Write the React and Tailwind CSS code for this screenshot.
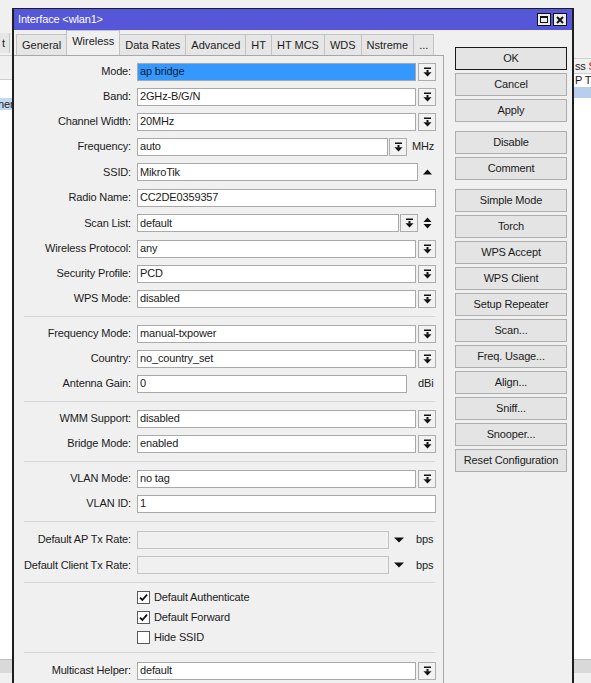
import React from "react";

// Small glyph used on every combo-box button: a bar over a down arrow
function DropIcon() {
  return (
    <svg width="9" height="10" viewBox="0 0 9 10">
      <rect x="1" y="0.5" width="7" height="1.5" fill="#111" />
      <rect x="3.5" y="3" width="2" height="2.5" fill="#111" />
      <path d="M0.5 5.2 H8.5 L4.5 9.5 Z" fill="#111" />
    </svg>
  );
}

function DropBtn({ className = "" }) {
  return (
    <div
      className={`flex h-[18px] w-[18px] shrink-0 items-center justify-center border border-[#adadad] bg-[#f2f2f2] ${className}`}
    >
      <DropIcon />
    </div>
  );
}

function Field({ value, className = "", selected = false, disabled = false }) {
  return (
    <div
      className={`flex h-[18px] items-center overflow-hidden whitespace-nowrap border ${
        disabled ? "border-[#c4c4c4] bg-[#f0f0f0]" : "border-[#a9a9a9] bg-white"
      } ${className}`}
    >
      {selected ? (
        <div className="flex h-full w-full items-center bg-[#3399ff] pl-[2px] text-[#0d1a33]">{value}</div>
      ) : (
        <span className="pl-[2px]">{value}</span>
      )}
    </div>
  );
}

function Row({ label, children, tall = false }) {
  return (
    <div className={`flex ${tall ? "h-[26px]" : "h-[25px]"} shrink-0 items-center`}>
      <div className="w-[117px] shrink-0 whitespace-nowrap text-right">{label}</div>
      <div className="ml-[6px] flex w-[299px] items-center">{children}</div>
    </div>
  );
}

function SelectRow({ label, value, selected }) {
  return (
    <Row label={label}>
      <Field value={value} selected={selected} className="flex-1" />
      <DropBtn className="ml-[2px]" />
    </Row>
  );
}

function Sep({ h = "h-[10px]" }) {
  return (
    <div className={`flex ${h} shrink-0 items-center pl-[10px] pr-[8px]`}>
      <div className="h-px w-full bg-[#d7d7d7]" />
    </div>
  );
}

function Check({ checked, label }) {
  return (
    <div className="flex h-[20px] shrink-0 items-center pl-[123px]">
      <div className="flex h-[13px] w-[13px] items-center justify-center border border-[#5a5a5a] bg-white">
        {checked && (
          <svg width="9" height="9" viewBox="0 0 9 9">
            <path d="M1 4.6 L3.4 7 L8 1.6" fill="none" stroke="#111" strokeWidth="1.8" />
          </svg>
        )}
      </div>
      <span className="ml-[4px]">{label}</span>
    </div>
  );
}

function Tab({ label, active }) {
  return (
    <div
      className={`-ml-px flex items-center border border-b-0 border-[#c3c3c3] px-[5px] tracking-normal ${
        active ? "z-10 h-[25px] bg-[#f0f0f0] pb-[3px]" : "h-[21px] bg-[#e6e6e6]"
      }`}
    >
      {label}
    </div>
  );
}

function Btn({ label, primary }) {
  return (
    <div
      className={`flex h-[23px] w-[112px] items-center justify-center border bg-[#e4e4e4] ${
        primary ? "border-[#1a1a1a]" : "border-[#adadad]"
      }`}
    >
      {label}
    </div>
  );
}

export default function App() {
  return (
    <div className="relative h-[683px] w-[591px] overflow-hidden bg-[#f0f0f0] font-['Liberation_Sans',Arial,sans-serif] text-[11px] tracking-[-0.15px] text-[#1b1b1b]">
      {/* applications behind the dialog */}
      <div className="flex h-full">
        <div className="flex w-[12px] flex-col overflow-hidden whitespace-nowrap">
          <div className="h-[33px] shrink-0 bg-[#f0f0f0]" />
          <div className="flex h-[22px] shrink-0 items-start bg-[#f0f0f0]">
            <div className="flex h-[20px] w-[10px] items-center border-r border-[#c3c3c3] bg-[#e6e6e6] pl-[2px]">t</div>
          </div>
          <div className="h-[25px] shrink-0 border-y border-[#cfcfcf] bg-[#f0f0f0]" />
          <div className="h-[18px] shrink-0 bg-white" />
          <div className="flex h-[12px] shrink-0 items-center bg-[#c3d9f0] text-[#222]">
            <span className="-ml-[2px]">ner</span>
          </div>
          <div className="flex-1 bg-white" />
          <div className="h-[14px] shrink-0 border-t border-[#bdbdbd] bg-[#d9d9d9]" />
          <div className="h-[10px] shrink-0 bg-[#f0f0f0]" />
        </div>
        <div className="flex-1" />
        <div className="flex w-[17px] flex-col overflow-hidden whitespace-nowrap">
          <div className="h-[58px] shrink-0 bg-[#f0f0f0]" />
          <div className="flex h-[16px] shrink-0 items-center border-y border-[#cfcfcf] bg-[#f0f0f0] pl-[1px]">
            ss&nbsp;<span className="text-[#c62020]">S</span>
          </div>
          <div className="flex h-[13px] shrink-0 items-center bg-white pl-[1px]">P T</div>
          <div className="h-[11px] shrink-0 bg-[#b7cfec]" />
          <div className="flex-1 bg-white" />
          <div className="h-[14px] shrink-0 border-t border-[#bdbdbd] bg-[#d9d9d9]" />
          <div className="h-[10px] shrink-0 bg-[#f0f0f0]" />
        </div>
      </div>

      {/* Interface <wlan1> dialog */}
      <div className="absolute left-[12px] top-[8px] flex h-[700px] w-[562px] flex-col border-x-2 border-t border-[#1e1e1e] bg-[#f0f0f0]">
        <div className="flex h-[21px] shrink-0 items-center justify-between bg-[#5656d8] pl-[4px] pr-[5px] text-white">
          <span>Interface &lt;wlan1&gt;</span>
          <div className="flex gap-[2px]">
            <div className="flex h-[13px] w-[14px] items-center justify-center border border-[#111] bg-[#ececec]">
              <div className="h-[7px] w-[8px] border border-t-2 border-[#111]" />
            </div>
            <div className="flex h-[13px] w-[14px] items-center justify-center border border-[#111] bg-[#ececec]">
              <svg width="8" height="8" viewBox="0 0 8 8">
                <path d="M1 1 L7 7 M7 1 L1 7" stroke="#111" strokeWidth="2" />
              </svg>
            </div>
          </div>
        </div>

        <div className="flex flex-1">
          {/* tabs and the Wireless page */}
          <div className="flex w-[430px] flex-col">
            <div className="flex h-[25px] shrink-0 items-end pl-[3px]">
              <Tab label="General" />
              <Tab label="Wireless" active />
              <Tab label="Data Rates" />
              <Tab label="Advanced" />
              <Tab label="HT" />
              <Tab label="HT MCS" />
              <Tab label="WDS" />
              <Tab label="Nstreme" />
              <Tab label="..." />
            </div>
            <div className="flex flex-1 flex-col border-r border-t border-[#a8a8a8] pt-[3px]">
              <SelectRow label="Mode:" value="ap bridge" selected />
              <SelectRow label="Band:" value="2GHz-B/G/N" />
              <SelectRow label="Channel Width:" value="20MHz" />
              <Row label="Frequency:">
                <Field value="auto" className="w-[251px]" />
                <DropBtn className="ml-[1px]" />
                <span className="ml-[5px]">MHz</span>
              </Row>
              <Row label="SSID:" tall>
                <Field value="MikroTik" className="w-[281px]" />
                <div className="flex flex-1 justify-center">
                  <svg width="9" height="6" viewBox="0 0 9 6">
                    <path d="M0 5.5 L4.5 0.5 L9 5.5 Z" fill="#111" />
                  </svg>
                </div>
              </Row>
              <Row label="Radio Name:">
                <Field value="CC2DE0359357" className="w-full" />
              </Row>
              <Row label="Scan List:" tall>
                <Field value="default" className="w-[262px]" />
                <DropBtn className="ml-[1px]" />
                <div className="flex flex-1 justify-center">
                  <svg width="9" height="12" viewBox="0 0 9 12">
                    <path d="M0.5 5 L4.5 0.5 L8.5 5 Z M0.5 7 L4.5 11.5 L8.5 7 Z" fill="#111" />
                  </svg>
                </div>
              </Row>
              <SelectRow label="Wireless Protocol:" value="any" />
              <SelectRow label="Security Profile:" value="PCD" />
              <SelectRow label="WPS Mode:" value="disabled" />
              <Sep />
              <SelectRow label="Frequency Mode:" value="manual-txpower" />
              <SelectRow label="Country:" value="no_country_set" />
              <Row label="Antenna Gain:">
                <Field value="0" className="w-[270px]" />
                <span className="ml-[11px]">dBi</span>
              </Row>
              <Sep />
              <SelectRow label="WMM Support:" value="disabled" />
              <SelectRow label="Bridge Mode:" value="enabled" />
              <Sep />
              <SelectRow label="VLAN Mode:" value="no tag" />
              <Row label="VLAN ID:">
                <Field value="1" className="w-full" />
              </Row>
              <Sep h="h-[11px]" />
              <Row label="Default AP Tx Rate:">
                <Field value="" disabled className="w-[252px]" />
                <svg className="ml-[5px]" width="10" height="6" viewBox="0 0 10 6">
                  <path d="M0 0.5 H10 L5 5.5 Z" fill="#111" />
                </svg>
                <span className="ml-[12px]">bps</span>
              </Row>
              <Row label="Default Client Tx Rate:" tall>
                <Field value="" disabled className="w-[252px]" />
                <svg className="ml-[5px]" width="10" height="6" viewBox="0 0 10 6">
                  <path d="M0 0.5 H10 L5 5.5 Z" fill="#111" />
                </svg>
                <span className="ml-[12px]">bps</span>
              </Row>
              <Sep h="h-[9px]" />
              <Check checked label="Default Authenticate" />
              <Check checked label="Default Forward" />
              <Check label="Hide SSID" />
              <Sep h="h-[11px]" />
              <SelectRow label="Multicast Helper:" value="default" />
            </div>
          </div>

          {/* command buttons */}
          <div className="flex flex-col gap-[9px] pl-[11px] pt-[17px]">
            <div className="flex flex-col gap-[3px]">
              <Btn label="OK" primary />
              <Btn label="Cancel" />
              <Btn label="Apply" />
            </div>
            <div className="flex flex-col gap-[3px]">
              <Btn label="Disable" />
              <Btn label="Comment" />
            </div>
            <div className="flex flex-col gap-[3px]">
              <Btn label="Simple Mode" />
              <Btn label="Torch" />
              <Btn label="WPS Accept" />
              <Btn label="WPS Client" />
              <Btn label="Setup Repeater" />
              <Btn label="Scan..." />
              <Btn label="Freq. Usage..." />
              <Btn label="Align..." />
              <Btn label="Sniff..." />
              <Btn label="Snooper..." />
              <Btn label="Reset Configuration" />
            </div>
          </div>
        </div>
      </div>
    </div>
  );
}
